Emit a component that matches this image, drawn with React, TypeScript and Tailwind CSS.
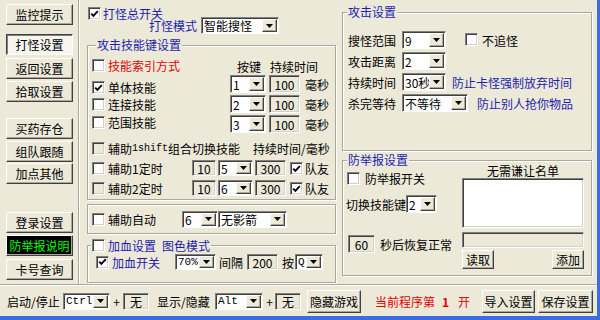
import type { ReactNode } from "react";

const nav = [
	{ label: "监控提示", mt: "mt-[4px]", kind: "normal" },
	{ label: "打怪设置", mt: "mt-[9px]", kind: "pressed" },
	{ label: "返回设置", mt: "mt-[3px]", kind: "normal" },
	{ label: "拾取设置", mt: "mt-[2px]", kind: "normal" },
	{ label: "买药存仓", mt: "mt-[16px]", kind: "normal" },
	{ label: "组队跟随", mt: "mt-[2px]", kind: "normal" },
	{ label: "加点其他", mt: "mt-[1px]", kind: "normal" },
	{ label: "登录设置", mt: "mt-[28px]", kind: "normal" },
	{ label: "防举报说明", mt: "mt-[2px]", kind: "dark" },
	{ label: "卡号查询", mt: "mt-[3px]", kind: "normal" },
];

function Arrow() {
	return (
		<svg width="7" height="4" viewBox="0 0 7 4">
			<path d="M0 0h7L3.5 4z" fill="#000" />
		</svg>
	);
}

function Check({ on, dim }: { on?: boolean; dim?: boolean }) {
	return (
		<span
			className={`inline-flex w-[13px] h-[13px] shrink-0 items-center justify-center border border-t-[#808080] border-l-[#808080] border-b-white border-r-white shadow-[inset_1px_1px_0_#404040,inset_-1px_-1px_0_#d4d0c8] ${
				dim ? "bg-[#ece9d8]" : "bg-white"
			}`}
		>
			{on && (
				<svg width="9" height="8" viewBox="0 0 9 8">
					<path d="M1.2 3.6 L3.4 5.9 L7.8 1.2" fill="none" stroke="#000" strokeWidth="1.9" />
				</svg>
			)}
		</span>
	);
}

function Combo({ value, className = "", mono }: { value: string; className?: string; mono?: boolean }) {
	return (
		<div
			className={`flex shrink-0 bg-white border border-t-[#808080] border-l-[#808080] border-b-white border-r-white shadow-[inset_1px_1px_0_#404040] ${className}`}
		>
			<span
				className={`flex-1 flex items-center pl-[2px] overflow-hidden whitespace-nowrap ${
					mono ? "font-['Liberation_Mono',monospace] text-[11px]" : ""
				}`}
			>
				{value}
			</span>
			<span className="w-[15px] shrink-0 my-[1px] mr-[1px] flex items-center justify-center bg-[#ece9d8] border border-t-white border-l-white border-b-[#404040] border-r-[#404040] shadow-[inset_-1px_-1px_0_#aca899]">
				<Arrow />
			</span>
		</div>
	);
}

function Field({ value = "", className = "" }: { value?: string; className?: string }) {
	return (
		<div
			className={`flex shrink-0 items-center justify-center bg-[#ece9d8] border border-t-[#808080] border-l-[#808080] border-b-white border-r-white shadow-[inset_1px_1px_0_#404040,inset_-1px_-1px_0_#d4d0c8] ${className}`}
		>
			{value}
		</div>
	);
}

function Btn({ children, className = "" }: { children: ReactNode; className?: string }) {
	return (
		<div
			className={`flex shrink-0 items-center justify-center bg-[#ece9d8] border border-t-white border-l-white border-b-[#404040] border-r-[#404040] shadow-[inset_-1px_-1px_0_#aca899] ${className}`}
		>
			{children}
		</div>
	);
}

function Group({ title, titleClass, className = "", children }: { title: ReactNode; titleClass: string; className?: string; children: ReactNode }) {
	return (
		<div
			className={`shrink-0 border border-t-[#aca899] border-l-[#aca899] border-b-[#aca899] border-r-[#aca899] shadow-[inset_1px_1px_0_#fff,1px_1px_0_#fff] ${className}`}
		>
			<div className={`w-fit h-[13px] px-[1px] flex items-center bg-[#ece9d8] text-[#1c1cae] ${titleClass}`}>{title}</div>
			{children}
		</div>
	);
}

function SideNav() {
	return (
		<div className="w-[78px] shrink-0 flex flex-col pl-[6px]">
			{nav.map((n) =>
				n.kind === "pressed" ? (
					<div
						key={n.label}
						className={`w-[67px] h-[21px] flex items-center justify-center bg-[#f6f5ef] border border-t-[#404040] border-l-[#404040] border-b-white border-r-white shadow-[inset_1px_1px_0_#808080] ${n.mt}`}
					>
						{n.label}
					</div>
				) : n.kind === "dark" ? (
					<Btn key={n.label} className={`w-[67px] h-[21px] !bg-black text-[#00ff00] ${n.mt}`}>
						{n.label}
					</Btn>
				) : (
					<Btn key={n.label} className={`w-[67px] h-[21px] ${n.mt}`}>
						{n.label}
					</Btn>
				)
			)}
		</div>
	);
}

function KeyRow({ k }: { k: string }) {
	return (
		<div className="flex items-center h-[18px] mt-[2px]">
			<Combo value={k} className="w-[36px] h-[18px]" />
			<Field value="100" className="w-[31px] h-[18px] ml-[3px]" />
			<span className="ml-[5px]">毫秒</span>
		</div>
	);
}

function TimerRow({ n, k, className }: { n: string; k: string; className: string }) {
	return (
		<div className={`flex items-center h-[16px] pl-[4px] ${className}`}>
			<Check dim={n === "2"} />
			<span className="ml-[3px] w-[84px]">辅助{n}定时</span>
			<Field value="10" className="w-[24px] h-[16px]" />
			<Combo value={k} className="w-[35px] h-[16px] ml-[2px]" />
			<Field value="300" className="w-[31px] h-[16px] ml-[2px]" />
			<span className="ml-[4px]">
				<Check on />
			</span>
			<span className="ml-[2px]">队友</span>
		</div>
	);
}

function AttackPane() {
	return (
		<div className="w-[260px] shrink-0 flex flex-col">
			<div className="flex items-center h-[13px] mt-[7px] ml-[8px]">
				<Check on />
				<span className="ml-[2px] text-[#1c1cae]">打怪总开关</span>
			</div>
			<div className="flex items-center h-[17px] -mt-[3px] ml-[69px]">
				<span className="text-[#1c1cae]">打怪模式</span>
				<Combo value="智能搜怪" className="w-[78px] h-[17px] ml-[4px]" />
			</div>

			<Group title="攻击技能键设置" titleClass="-mt-[8px] ml-[8px]" className="mt-[11px] ml-[7px] w-[249px] h-[155px]">
				<div className="flex">
					<div className="w-[142px] pl-[4px] flex flex-col">
						<div className="flex items-center h-[13px] mt-[8px]">
							<Check />
							<span className="ml-[3px] text-[#e00000]">技能索引方式</span>
						</div>
						<div className="flex items-center h-[13px] mt-[9px]">
							<Check on />
							<span className="ml-[3px]">单体技能</span>
						</div>
						<div className="flex items-center h-[13px] mt-[4px]">
							<Check />
							<span className="ml-[3px]">连接技能</span>
						</div>
						<div className="flex items-center h-[13px] mt-[5px]">
							<Check />
							<span className="ml-[3px]">范围技能</span>
						</div>
					</div>
					<div className="flex flex-col">
						<div className="flex items-center h-[13px] mt-[9px]">
							<span className="ml-[7px]">按键</span>
							<span className="ml-[9px]">持续时间</span>
						</div>
						<KeyRow k="1" />
						<KeyRow k="2" />
						<KeyRow k="3" />
					</div>
				</div>
				<div className="flex items-center h-[13px] mt-[9px] pl-[4px]">
					<Check dim />
					<span className="ml-[3px] flex items-center">
						辅助<span className="font-['Liberation_Mono',monospace] text-[10px]">1shift</span>组合切换技能
					</span>
					<span className="ml-[13px]">持续时间/毫秒</span>
				</div>
				<TimerRow n="1" k="5" className="mt-[5px]" />
				<TimerRow n="2" k="6" className="mt-[4px]" />
			</Group>

			<div className="mt-[4px] ml-[7px] w-[249px] h-[30px] shrink-0 flex items-center pl-[4px] border border-t-[#aca899] border-l-[#aca899] border-b-[#aca899] border-r-[#aca899] shadow-[inset_1px_1px_0_#fff,1px_1px_0_#fff]">
				<Check />
				<span className="ml-[3px] w-[74px]">辅助自动</span>
				<Combo value="6" className="w-[36px] h-[17px]" />
				<Combo value="无影箭" className="w-[69px] h-[17px]" />
			</div>

			<Group
				title={
					<>
						<Check />
						<span className="ml-[3px]">加血设置</span>
						<span className="ml-[6px]">图色模式</span>
					</>
				}
				titleClass="-mt-[7px] ml-[3px]"
				className="mt-[11px] ml-[7px] w-[249px] h-[38px]"
			>
				<div className="flex items-center h-[16px] mt-[2px] pl-[8px]">
					<Check on />
					<span className="ml-[3px] text-[#1c1cae]">加血开关</span>
					<Combo value="70%" mono className="w-[41px] h-[16px] ml-[15px]" />
					<span className="ml-[3px]">间隔</span>
					<Field value="200" className="w-[31px] h-[16px] ml-[4px]" />
					<span className="ml-[4px]">按</span>
					<Combo value="Q" mono className="w-[28px] h-[16px] ml-[1px]" />
				</div>
			</Group>
		</div>
	);
}

function RightPane() {
	return (
		<div className="flex-1 flex flex-col">
			<Group title="攻击设置" titleClass="-mt-[8px] ml-[4px]" className="mt-[12px] ml-[2px] w-[250px] h-[139px]">
				<div className="flex flex-col gap-[3px] mt-[13px] pl-[5px]">
					<div className="flex items-center h-[18px]">
						<span className="w-[54px]">搜怪范围</span>
						<Combo value="9" className="w-[44px] h-[18px]" />
						<span className="ml-[19px]">
							<Check />
						</span>
						<span className="ml-[4px]">不追怪</span>
					</div>
					<div className="flex items-center h-[18px]">
						<span className="w-[54px]">攻击距离</span>
						<Combo value="2" className="w-[44px] h-[18px]" />
					</div>
					<div className="flex items-center h-[18px]">
						<span className="w-[54px]">持续时间</span>
						<Combo value="30秒" className="w-[44px] h-[18px]" />
						<span className="ml-[6px] text-[#1c1cae]">防止卡怪强制放弃时间</span>
					</div>
					<div className="flex items-center h-[18px]">
						<span className="w-[54px]">杀完等待</span>
						<Combo value="不等待" className="w-[66px] h-[18px]" />
						<span className="ml-[9px] text-[#1c1cae]">防止别人抢你物品</span>
					</div>
				</div>
			</Group>

			<Group title="防举报设置" titleClass="-mt-[8px] ml-[4px]" className="mt-[9px] ml-[2px] w-[250px] h-[116px]">
				<div className="flex">
					<div className="w-[119px] flex flex-col">
						<div className="flex items-center h-[13px] mt-[6px] pl-[4px]">
							<Check />
							<span className="ml-[5px]">防举报开关</span>
						</div>
						<div className="flex items-center h-[18px] mt-[10px] pl-[3px]">
							<span className="w-[60px]">切换技能键</span>
							<Combo value="2" className="w-[31px] h-[18px]" />
						</div>
						<div className="flex items-center h-[18px] mt-[22px] pl-[5px]">
							<Field value="60" className="w-[27px] h-[18px]" />
							<span className="ml-[5px]">秒后恢复正常</span>
						</div>
					</div>
					<div className="w-[122px] flex flex-col">
						<div className="h-[12px] -mt-[2px] flex items-center justify-center">无需谦让名单</div>
						<div className="h-[50px] mt-[2px] bg-white border border-t-[#808080] border-l-[#808080] border-b-white border-r-white shadow-[inset_1px_1px_0_#404040,inset_-1px_-1px_0_#d4d0c8]" />
						<Field className="h-[16px] mt-[4px]" />
						<div className="flex justify-between mt-[2px]">
							<Btn className="w-[32px] h-[19px]">读取</Btn>
							<Btn className="w-[32px] h-[19px]">添加</Btn>
						</div>
					</div>
				</div>
			</Group>
		</div>
	);
}

function BottomBar() {
	return (
		<div className="flex items-center h-[30px] shrink-0 pl-[7px]">
			<span className="w-[56px]">启动/停止</span>
			<Combo value="Ctrl" mono className="w-[47px] h-[17px]" />
			<span className="ml-[3px] w-[7px] text-center">+</span>
			<Field value="无" className="w-[26px] h-[17px] ml-[3px]" />
			<span className="ml-[8px] w-[58px]">显示/隐藏</span>
			<Combo value="Alt" mono className="w-[48px] h-[17px]" />
			<span className="ml-[3px] w-[7px] text-center">+</span>
			<Field value="无" className="w-[26px] h-[17px] ml-[2px]" />
			<Btn className="w-[54px] h-[23px] ml-[6px]">隐藏游戏</Btn>
			<span className="ml-[14px] text-[#e00000]">当前程序第</span>
			<span className="ml-[7px] text-[#e00000] font-bold">1</span>
			<span className="ml-[9px] text-[#e00000]">开</span>
			<Btn className="w-[53px] h-[23px] ml-[12px]">导入设置</Btn>
			<Btn className="w-[55px] h-[23px] ml-[3px]">保存设置</Btn>
		</div>
	);
}

export default function App() {
	return (
		<div className="w-[600px] h-[320px] overflow-hidden flex flex-col bg-[#ece9d8] border-r-[3px] border-b-[4px] border-r-[#3a6ee0] border-b-[#3a6ee0] font-['Noto_Sans_CJK_SC','Liberation_Sans',sans-serif] text-[12px] leading-[13px] text-black">
			<div className="flex h-[284px] shrink-0">
				<SideNav />
				<div className="w-[2px] h-[284px] shrink-0 border-l border-l-[#aca899] border-r border-r-white" />
				<AttackPane />
				<RightPane />
			</div>
			<div className="h-[2px] shrink-0 border-t border-t-[#aca899] border-b border-b-white" />
			<BottomBar />
		</div>
	);
}
